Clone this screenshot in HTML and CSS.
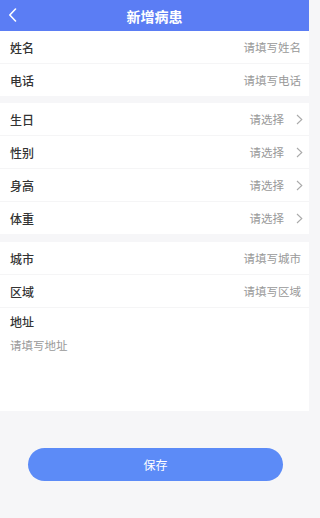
FILE: index.html
```html
<!DOCTYPE html>
<html lang="zh-CN">
<head>
<meta charset="utf-8">
<title>新增病患</title>
<link rel="stylesheet" href="styles.css">
</head>
<body>
<div class="page">
  <header class="nav">
    <span class="back"><svg width="9" height="14" viewBox="0 0 9 14"><path d="M7.5 1 L1.8 7 L7.5 13" fill="none" stroke="#fff" stroke-width="1.6" stroke-linecap="round" stroke-linejoin="round"/></svg></span>
    <h1 class="title">新增病患</h1>
  </header>

  <section class="group">
    <div class="row"><span class="label">姓名</span><span class="ph">请填写姓名</span></div>
    <div class="row"><span class="label">电话</span><span class="ph">请填写电话</span></div>
  </section>

  <section class="group gap1">
    <div class="row select"><span class="label">生日</span><span class="ph">请选择</span><span class="arrow"><svg width="7" height="11" viewBox="0 0 7 11"><path d="M1 1 L5.8 5.5 L1 10" fill="none" stroke="#aaa" stroke-width="1.1"/></svg></span></div>
    <div class="row select"><span class="label">性别</span><span class="ph">请选择</span><span class="arrow"><svg width="7" height="11" viewBox="0 0 7 11"><path d="M1 1 L5.8 5.5 L1 10" fill="none" stroke="#aaa" stroke-width="1.1"/></svg></span></div>
    <div class="row select"><span class="label">身高</span><span class="ph">请选择</span><span class="arrow"><svg width="7" height="11" viewBox="0 0 7 11"><path d="M1 1 L5.8 5.5 L1 10" fill="none" stroke="#aaa" stroke-width="1.1"/></svg></span></div>
    <div class="row select"><span class="label">体重</span><span class="ph">请选择</span><span class="arrow"><svg width="7" height="11" viewBox="0 0 7 11"><path d="M1 1 L5.8 5.5 L1 10" fill="none" stroke="#aaa" stroke-width="1.1"/></svg></span></div>
  </section>

  <section class="group gap2">
    <div class="row"><span class="label">城市</span><span class="ph">请填写城市</span></div>
    <div class="row"><span class="label">区域</span><span class="ph">请填写区域</span></div>
    <div class="address">
      <div class="label">地址</div>
      <div class="ph">请填写地址</div>
    </div>
  </section>

  <div class="footer">
    <button class="save">保存</button>
  </div>
</div>
</body>
</html>
```

FILE: styles.css
```css
* { box-sizing: border-box; }
html, body {
  margin: 0;
  padding: 0;
  background: #f6f6f8;
  font-family: "Noto Sans CJK SC", "Noto Sans", sans-serif;
}
.page {
  width: 309px;
  min-height: 518px;
  background: #f6f6f8;
}
.nav {
  height: 31px;
  background: #5b7df4;
  display: flex;
  align-items: center;
  justify-content: center;
  position: relative;
}
.back {
  position: absolute;
  left: 8px;
  top: 8px;
  display: flex;
}
.title {
  margin: 0;
  font-size: 14px;
  font-weight: 700;
  color: #fff;
  line-height: 1;
}
.group {
  background: #fff;
}
.gap1 { margin-top: 7px; }
.gap2 { margin-top: 8px; }
.row {
  height: 33px;
  display: flex;
  align-items: center;
  padding: 0 8px 0 10px;
  border-bottom: 1px solid #f5f5f6;
}
.row:last-child { border-bottom: none; height: 32px; }
.label {
  flex: 1;
  font-size: 12px;
  color: #333;
  font-weight: 500;
}
.ph {
  font-size: 11.5px;
  color: #999;
}
.select { padding-right: 6px; }
.arrow {
  display: flex;
  margin-left: 12px;
}
.address {
  height: 103px;
  padding: 6px 10px 0 10px;
}
.address .label {
  line-height: 16px;
}
.address .ph {
  margin-top: 7px;
  line-height: 16px;
}
.footer {
  padding: 37px 26px 0 28px;
}
.save {
  display: block;
  width: 255px;
  height: 33px;
  border: none;
  border-radius: 17px;
  background: #5c8bf7;
  color: #fff;
  font-family: inherit;
  font-size: 12px;
  padding: 0;
}
```
